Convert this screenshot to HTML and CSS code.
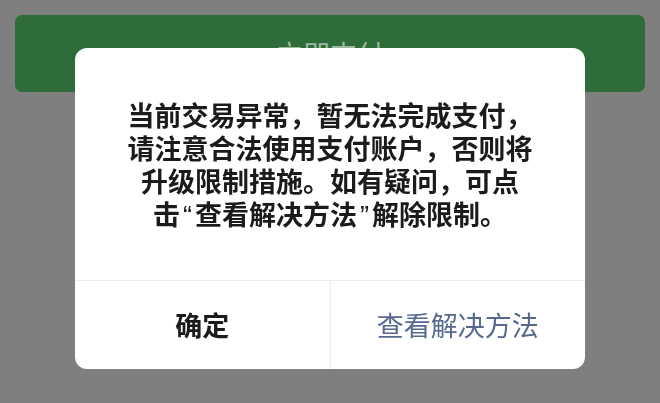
FILE: index.html
```html
<!DOCTYPE html>
<html lang="zh-CN">
<head>
	<meta charset="utf-8">
	<title>支付</title>
	<link rel="stylesheet" href="styles.css">
</head>
<body>
	<div class="pay-btn">立即支付</div>

	<!-- 弹窗遮罩 -->
	<div class="mask">
		<div class="dialog">
			<div class="dialog-body">
				<p class="line">当前交易异常，暂无法完成支付，</p>
				<p class="line">请注意合法使用支付账户，否则将</p>
				<p class="line">升级限制措施。如有疑问，可点</p>
				<p class="line">击<span class="q">“</span>查看解决方法<span class="q">”</span>解除限制。</p>
			</div>
			<div class="dialog-foot">
				<div class="dialog-btn">确定</div>
				<div class="dialog-btn link">查看解决方法</div>
			</div>
		</div>
	</div>
</body>
</html>
```

FILE: styles.css
```css
body {
	margin: 0;
	background: #7f7f7f;
	font-family: "Noto Sans CJK SC", "Noto Sans", sans-serif;
}
.pay-btn {
	margin: 15px 15px 0;
	height: 77px;
	line-height: 77px;
	border-radius: 7px;
	background: #2e6d39;
	color: #9fb9a3;
	font-size: 27px;
	text-align: center;
}
.mask {
	position: fixed;
	top: 0;
	left: 0;
	right: 0;
	bottom: 0;
	display: flex;
	justify-content: center;
	align-items: flex-start;
	padding-top: 48px;
}
.dialog {
	width: 510px;
	background: #fff;
	border-radius: 12px;
	overflow: hidden;
}
.dialog-body {
	height: 232px;
	display: flex;
	flex-direction: column;
	align-items: center;
	justify-content: center;
	font-size: 27px;
	font-weight: 600;
	color: #1b1b1b;
}
.line {
	margin: 0;
	line-height: 33px;
	text-align: center;
}
/* 引号用西文字体，比全角窄一些 */
.q {
	display: inline-block;
	font-family: "Liberation Sans", sans-serif;
	font-weight: 400;
	line-height: 20px;
	padding: 0 3px;
}
.dialog-foot {
	display: flex;
	height: 88px;
	border-top: 1px solid #ededed;
}
.dialog-btn {
	flex: 1;
	display: flex;
	align-items: center;
	justify-content: center;
	font-size: 27px;
	font-weight: 600;
	color: #1b1b1b;
	padding-bottom: 2px;
}
.dialog-btn + .dialog-btn {
	border-left: 1px solid #ededed;
}
.dialog-btn.link {
	color: #56698f;
	font-weight: 400;
}
```
